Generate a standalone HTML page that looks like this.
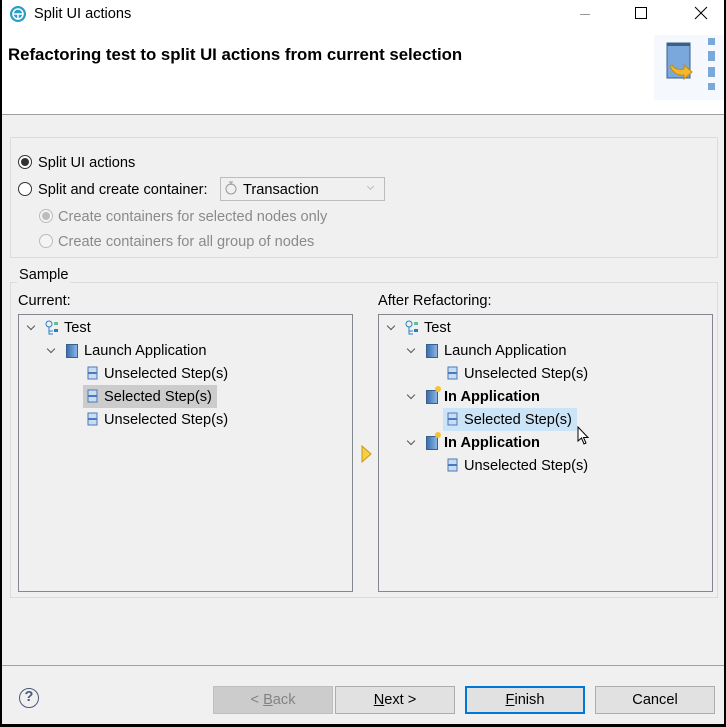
<!DOCTYPE html>
<html><head><style>
*{box-sizing:border-box}
body{margin:0;width:726px;height:727px;background:#000;font-family:"Liberation Sans",sans-serif;font-size:14.6px;color:#000;position:relative;overflow:hidden}
.win{position:absolute;left:2px;top:0;width:722px;height:724px;background:#f0f0f0}
.abs{position:absolute;white-space:nowrap}
.tb{position:absolute;left:0;top:0;width:722px;height:115px;background:#fff;border-bottom:1px solid #a0a0a0}
.grp{position:absolute;border:1px solid #dcdcdc}
.tree{position:absolute;border:1px solid #828790;background:#f0f0f0}
.radio{position:absolute;width:14px;height:14px;border-radius:50%;border:1px solid #333;background:#fff}
.radio.dis{border-color:#bcbcbc;background:#f4f4f4}
.btn{position:absolute;top:686px;height:28px;border:1px solid #adadad;background:#e1e1e1;text-align:center;line-height:26px;font-size:14.6px}
.chev{position:absolute;width:6px;height:6px;border-right:1.5px solid #555;border-bottom:1.5px solid #555;transform:rotate(45deg)}
.gray{color:#8a8a8a}
</style></head><body>
<div class="win">
<div class="tb"></div>
<svg class="abs" style="left:7px;top:5px" width="18" height="18"><circle cx="9" cy="9" r="8" fill="#2a9ec4"/><circle cx="9" cy="9" r="5" fill="none" stroke="#fff" stroke-width="1.5"/><path d="M4 9h10M9 9v5" stroke="#fff" stroke-width="1.5"/></svg>
<div class="abs" style="left:32px;top:6px">Split UI actions</div>
<div class="abs" style="left:578px;top:14px;width:10px;height:1px;background:#999"></div>
<div class="abs" style="left:633px;top:7px;width:12px;height:12px;border:1px solid #000"></div>
<svg class="abs" style="left:692px;top:6px" width="14" height="14"><path d="M1 1L13 13M13 1L1 13" stroke="#000" stroke-width="1"/></svg>
<div class="abs" style="left:6px;top:45px;font-weight:bold;font-size:16.8px">Refactoring test to split UI actions from current selection</div>
<svg class="abs" style="left:652px;top:35px" width="70" height="65"><rect x="0" y="0" width="70" height="65" fill="#eef4fb" opacity=".6"/><rect x="13" y="8" width="23" height="35" fill="#7aa8dc" stroke="#3a5f8c"/><rect x="13" y="8" width="23" height="3" fill="#3a5f8c"/><path d="M18 30q4 6 12 4l0-4 8 7-8 7v-4q-10 1-14-9z" fill="#f4b82a" stroke="#c48a10"/><rect x="54" y="3" width="7" height="7" fill="#7aa8d8"/><rect x="54" y="16" width="7" height="10" fill="#7aa8d8"/><rect x="54" y="32" width="7" height="10" fill="#7aa8d8"/><rect x="54" y="48" width="7" height="7" fill="#7aa8d8"/></svg>

<div class="grp" style="left:8px;top:137px;width:708px;height:121px"></div>
<div class="radio" style="left:16px;top:155px"><div style="position:absolute;left:2px;top:2px;width:8px;height:8px;border-radius:50%;background:#333"></div></div>
<div class="abs" style="left:36px;top:155px">Split UI actions</div>
<div class="radio" style="left:16px;top:182px"></div>
<div class="abs" style="left:36px;top:182px">Split and create container:</div>
<div class="abs" style="left:218px;top:177px;width:165px;height:24px;border:1px solid #bcbcbc;background:#f0f0f0"></div>
<svg class="abs" style="left:222px;top:180px" width="14" height="16"><circle cx="7" cy="9" r="5" fill="none" stroke="#999"/><path d="M5 2h4M7 2v3" stroke="#999"/></svg>
<div class="abs" style="left:241px;top:182px">Transaction</div>
<div class="chev" style="left:366px;top:184px;border-color:#bbb;width:5px;height:5px"></div>
<div class="radio dis" style="left:37px;top:209px"><div style="position:absolute;left:2px;top:2px;width:8px;height:8px;border-radius:50%;background:#bcbcbc"></div></div>
<div class="abs gray" style="left:56px;top:209px">Create containers for selected nodes only</div>
<div class="radio dis" style="left:37px;top:234px"></div>
<div class="abs gray" style="left:56px;top:234px">Create containers for all group of nodes</div>

<div class="grp" style="left:8px;top:282px;width:708px;height:316px"></div>
<div class="abs" style="left:15px;top:267px;background:#f0f0f0;padding:0 2px">Sample</div>
<div class="abs" style="left:16px;top:293px">Current:</div>
<div class="abs" style="left:376px;top:293px">After Refactoring:</div>
<div class="tree" style="left:16px;top:314px;width:335px;height:278px"></div>
<div class="tree" style="left:376px;top:314px;width:335px;height:278px"></div>

<div class="chev" style="left:26px;top:323px"></div>
<svg class="abs" style="left:42px;top:320px" width="16" height="16"><circle cx="5" cy="4" r="3" fill="none" stroke="#2a7fc4"/><path d="M5 7v7h4M5 11h4" stroke="#2a7fc4" fill="none"/><rect x="10" y="2" width="4" height="3" fill="#6b9"/><rect x="10" y="9" width="4" height="3" fill="#2a7fc4"/></svg>
<div class="abs" style="left:62px;top:320px">Test</div>
<div class="chev" style="left:46px;top:346px"></div>
<div class="abs" style="left:64px;top:344px;width:12px;height:14px;background:linear-gradient(90deg,#3a6fb0,#8bb4e4);border:1px solid #3a5f8c"></div>
<div class="abs" style="left:82px;top:343px">Launch Application</div>
<svg class="abs" style="left:85px;top:366px" width="12" height="14"><rect x="1" y="1" width="9" height="12" fill="#c9dcf2" stroke="#4a7ab8"/><path d="M1 7h9" stroke="#4a7ab8" stroke-width="2"/></svg>
<div class="abs" style="left:102px;top:366px">Unselected Step(s)</div>
<div class="abs" style="left:81px;top:385px;width:134px;height:23px;background:#cccccc"></div>
<svg class="abs" style="left:85px;top:389px" width="12" height="14"><rect x="1" y="1" width="9" height="12" fill="#c9dcf2" stroke="#4a7ab8"/><path d="M1 7h9" stroke="#4a7ab8" stroke-width="2"/></svg>
<div class="abs" style="left:102px;top:389px">Selected Step(s)</div>
<svg class="abs" style="left:85px;top:412px" width="12" height="14"><rect x="1" y="1" width="9" height="12" fill="#c9dcf2" stroke="#4a7ab8"/><path d="M1 7h9" stroke="#4a7ab8" stroke-width="2"/></svg>
<div class="abs" style="left:102px;top:412px">Unselected Step(s)</div>

<svg class="abs" style="left:359px;top:445px" width="12" height="18"><path d="M1 1L10 9L1 17Z" fill="#f6cf45" stroke="#c99a10"/></svg>

<div class="chev" style="left:386px;top:323px"></div>
<svg class="abs" style="left:402px;top:320px" width="16" height="16"><circle cx="5" cy="4" r="3" fill="none" stroke="#2a7fc4"/><path d="M5 7v7h4M5 11h4" stroke="#2a7fc4" fill="none"/><rect x="10" y="2" width="4" height="3" fill="#6b9"/><rect x="10" y="9" width="4" height="3" fill="#2a7fc4"/></svg>
<div class="abs" style="left:422px;top:320px">Test</div>
<div class="chev" style="left:406px;top:346px"></div>
<div class="abs" style="left:424px;top:344px;width:12px;height:14px;background:linear-gradient(90deg,#3a6fb0,#8bb4e4);border:1px solid #3a5f8c"></div>
<div class="abs" style="left:442px;top:343px">Launch Application</div>
<svg class="abs" style="left:445px;top:366px" width="12" height="14"><rect x="1" y="1" width="9" height="12" fill="#c9dcf2" stroke="#4a7ab8"/><path d="M1 7h9" stroke="#4a7ab8" stroke-width="2"/></svg>
<div class="abs" style="left:462px;top:366px">Unselected Step(s)</div>
<div class="chev" style="left:406px;top:392px"></div>
<div class="abs" style="left:424px;top:390px;width:12px;height:14px;background:linear-gradient(90deg,#3a6fb0,#8bb4e4);border:1px solid #3a5f8c"></div>
<div class="abs" style="left:433px;top:386px;width:6px;height:6px;border-radius:50%;background:#f4c430"></div>
<div class="abs" style="left:442px;top:389px;font-weight:bold">In Application</div>
<div class="abs" style="left:441px;top:408px;width:134px;height:23px;background:#cce4f7"></div>
<svg class="abs" style="left:445px;top:412px" width="12" height="14"><rect x="1" y="1" width="9" height="12" fill="#c9dcf2" stroke="#4a7ab8"/><path d="M1 7h9" stroke="#4a7ab8" stroke-width="2"/></svg>
<div class="abs" style="left:462px;top:412px">Selected Step(s)</div>
<svg class="abs" style="left:575px;top:426px" width="14" height="20"><path d="M1 1L1 15L4.5 12L7 18L9 17L6.5 11.5L11 11.5Z" fill="#fff" stroke="#000"/></svg>
<div class="chev" style="left:406px;top:438px"></div>
<div class="abs" style="left:424px;top:436px;width:12px;height:14px;background:linear-gradient(90deg,#3a6fb0,#8bb4e4);border:1px solid #3a5f8c"></div>
<div class="abs" style="left:433px;top:432px;width:6px;height:6px;border-radius:50%;background:#f4c430"></div>
<div class="abs" style="left:442px;top:435px;font-weight:bold">In Application</div>
<svg class="abs" style="left:445px;top:458px" width="12" height="14"><rect x="1" y="1" width="9" height="12" fill="#c9dcf2" stroke="#4a7ab8"/><path d="M1 7h9" stroke="#4a7ab8" stroke-width="2"/></svg>
<div class="abs" style="left:462px;top:458px">Unselected Step(s)</div>

<div class="abs" style="left:0;top:665px;width:722px;height:1px;background:#a0a0a0"></div>
<div class="abs" style="left:17px;top:688px;width:20px;height:20px;border:1.5px solid #4a5a78;border-radius:50%;text-align:center;line-height:17px;color:#4a5a78;font-weight:bold">?</div>
<div class="btn" style="left:211px;width:120px;background:#cccccc;border-color:#bfbfbf;color:#838383">&lt; <u>B</u>ack</div>
<div class="btn" style="left:333px;width:120px"><u>N</u>ext &gt;</div>
<div class="btn" style="left:463px;width:120px;border:2px solid #0078d7;line-height:24px"><u>F</u>inish</div>
<div class="btn" style="left:593px;width:120px">Cancel</div>
</div>
</body></html>
